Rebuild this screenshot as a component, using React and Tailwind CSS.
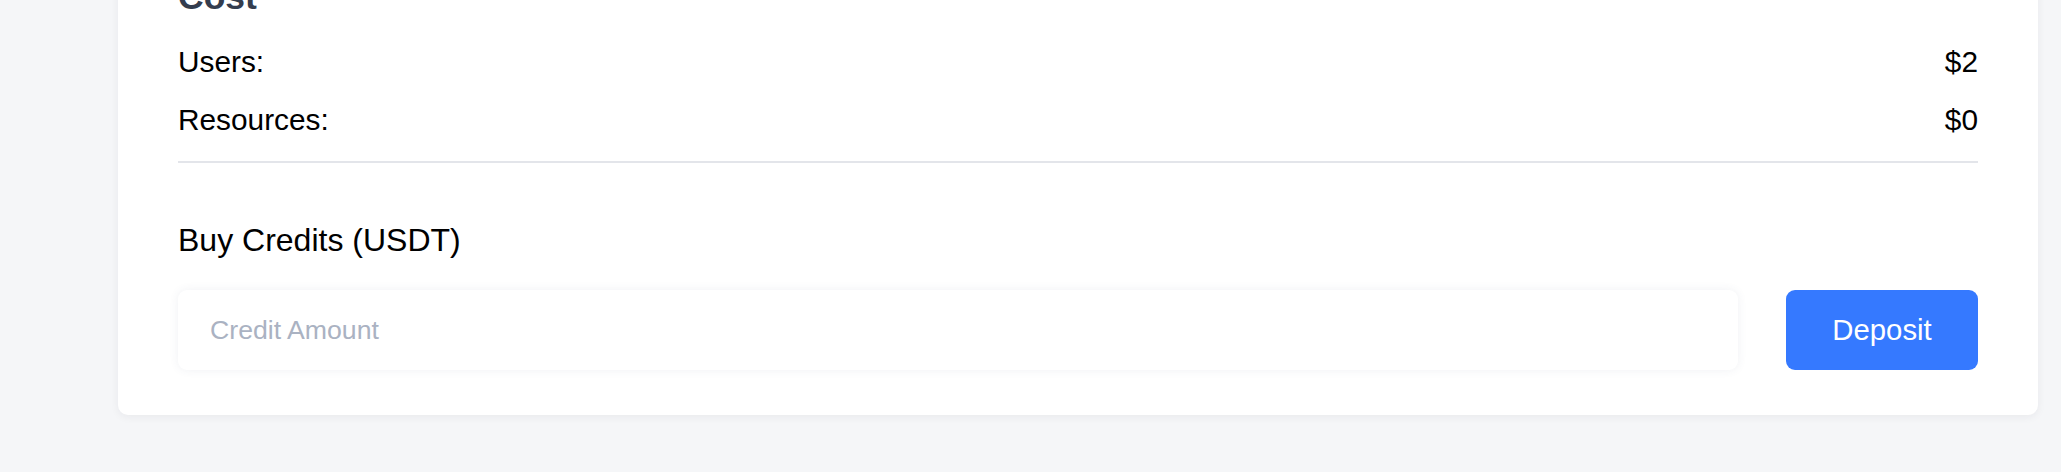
import React, { useState } from 'react';

export default function App() {
  const [amount, setAmount] = useState('');

  return (
    <div className="min-h-screen bg-[#f5f6f8] font-['Liberation_Sans',Arial,sans-serif] overflow-hidden">
      <div className="ml-[118px] mt-[-60px] w-[1920px] bg-white rounded-[10px] shadow-[0_2px_8px_rgba(30,41,59,0.06)] px-[60px] pt-[31px] pb-[45px]">
        <h2 className="text-[35.5px] leading-[53px] font-bold text-[#343d4e]">Cost</h2>

        <div className="mt-[16px] flex flex-col gap-[14px] text-[29.8px] leading-[44px] text-black">
          <div className="flex justify-between">
            <span>Users:</span>
            <span>$2</span>
          </div>
          <div className="flex justify-between">
            <span>Resources:</span>
            <span>$0</span>
          </div>
        </div>

        <div className="mt-[19px] h-[2px] bg-[#e3e5ea]" />

        <h3 className="mt-[53px] text-[32px] leading-[48px] text-black">Buy Credits (USDT)</h3>

        <div className="mt-[26px] flex items-center gap-[48px]">
          <input
            type="number"
            value={amount}
            onChange={(e) => setAmount(e.target.value)}
            placeholder="Credit Amount"
            className="flex-1 h-[80px] rounded-[9px] bg-white px-[32px] text-[26.67px] text-black placeholder:text-[#aab2c2] outline-none shadow-[0_0_10px_rgba(60,72,110,0.08)]"
          />
          <button className="w-[192px] h-[80px] rounded-[9px] bg-[#3579ff] text-white text-[29.33px]">
            Deposit
          </button>
        </div>
      </div>
    </div>
  );
}
